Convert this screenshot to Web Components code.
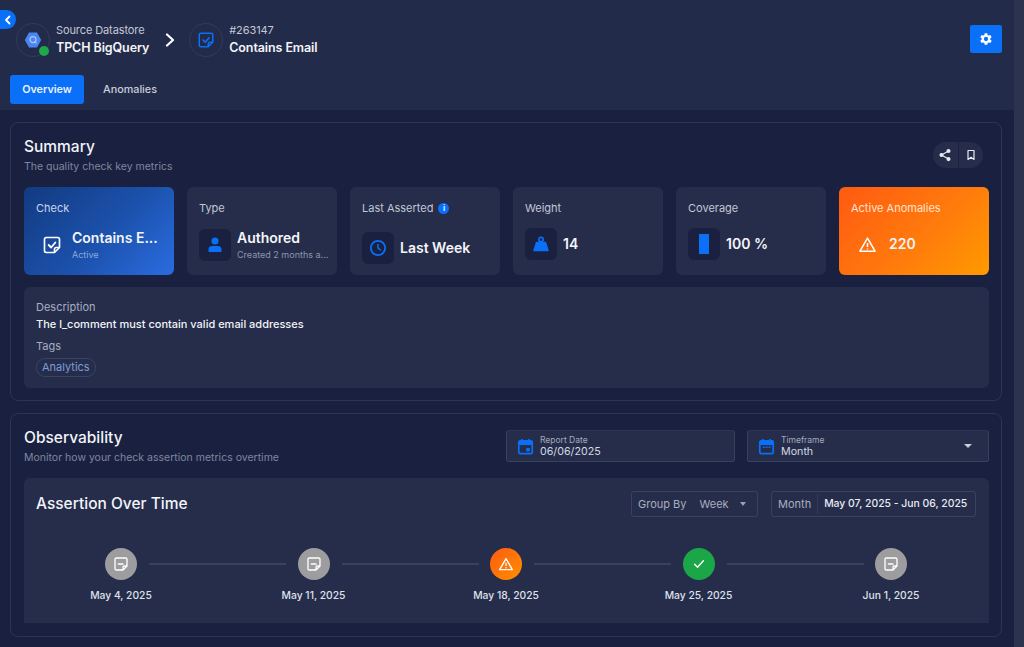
<!DOCTYPE html>
<html>
<head>
<meta charset="utf-8">
<title>Contains Email</title>
<style>
	html,body{ margin:0; height:647px; overflow:hidden; background:#1a2140; }
	body{ font-family:Inter,"Noto Sans",sans-serif; color:#fff; }
</style>
</head>
<body>

<q-app>
	<q-header slot="header"></q-header>
	<q-section heading="Summary" sub="The quality check key metrics" style="height:279px">
		<q-actions slot="tools"></q-actions>
		<q-stats></q-stats>
		<q-description></q-description>
	</q-section>
	<q-section heading="Observability" sub="Monitor how your check assertion metrics overtime" style="height:224px">
		<q-filters slot="tools"></q-filters>
		<q-assertions></q-assertions>
	</q-section>
</q-app>

<script>
	(function(){
		'use strict';

		const BLUE = '#0970f7';
		const ICONS = {
			note:'<path d="M5 3h14a2 2 0 0 1 2 2v10l-6 6H5a2 2 0 0 1-2-2V5a2 2 0 0 1 2-2z" fill="none" stroke="currentColor" stroke-width="2" stroke-linejoin="round"/><path d="M21 15h-4a2 2 0 0 0-2 2v4" fill="none" stroke="currentColor" stroke-width="2"/>',
			check:'<path d="M8 12l3 3 5-6" fill="none" stroke="currentColor" stroke-width="2.2" stroke-linecap="round" stroke-linejoin="round"/>',
			tick:'<path d="M4.500 12.500l5 5L19.500 6.500" fill="none" stroke="currentColor" stroke-width="2.400" stroke-linecap="round" stroke-linejoin="round"/>',
			dash:'<path d="M8 12h7" fill="none" stroke="currentColor" stroke-width="2" stroke-linecap="round"/>',
			warn:'<path d="M12 4L2.5 20.5h19z" fill="none" stroke="currentColor" stroke-width="2" stroke-linejoin="round"/><path d="M12 10v5M12 17v1.4" stroke="currentColor" stroke-width="2"/>'
		};

		function define(tag, css, html, extra){
			class El extends HTMLElement {
				constructor(){
					super();
					this.attachShadow({mode:'open'});
				}
				connectedCallback(){
					const a = n => this.getAttribute(n) || '';
					this.shadowRoot.innerHTML = '<style>'+css+'</style>'+html(a);
					if(extra){ extra(this); }
				}
			}
			customElements.define(tag, El);
		}

		define('q-app', `
			:host{ display:flex; width:1024px; height:647px; overflow:hidden; }
			.main{ width:1014px; flex:none; position:relative; }
			.body{ display:flex; flex-direction:column; gap:12px; padding:12px 12px 0 10px; }
			.bar{ flex:1; background:#2c334f; }
			`, () => `
			<div class="main">
				<slot name="header"></slot>
				<div class="body"><slot></slot></div>
			</div>
			<div class="bar"></div>`);

		define('q-header', `
			:host{ display:block; height:110px; background:#232b4a; position:relative; }
			.back{ position:absolute; left:0; top:10px; width:16px; height:19px; background:${BLUE}; border-radius:0 10px 10px 0; display:flex; align-items:center; justify-content:center; }
			.back svg{ width:10px; height:10px; }
			.crumbs{ display:flex; align-items:center; padding:23px 12px 0 16px; height:33px; }
			.ring{ width:32px; height:32px; border:1px solid #333b5a; border-radius:50%; position:relative; display:flex; align-items:center; justify-content:center; flex:none; }
			.dot{ position:absolute; right:0; bottom:0; width:10px; height:10px; border-radius:50%; background:#1da84a; }
			.txt{ margin-left:6px; }
			.t1{ font-size:11px; line-height:14px; color:#c3c8d6; letter-spacing:-.1px; }
			.t2{ font-size:12.5px; line-height:18px; font-weight:600; color:#f2f4f8; margin-top:2px; letter-spacing:-.1px; }
			.sep{ margin:0 13px 0 15px; width:12px; height:14px; }
			.gear{ margin-left:auto; width:32px; height:28px; border-radius:2px; background:${BLUE}; display:flex; align-items:center; justify-content:center; position:relative; top:-1px; }
			.tabs{ display:flex; align-items:center; margin:19px 0 0 10px; font-size:10.8px; font-weight:600; }
			.tab{ width:74px; height:29px; border-radius:3px; display:flex; align-items:center; justify-content:center; color:#c9cdd9; }
			.on{ background:${BLUE}; color:#e9f1ff; }
			.tab + .tab{ margin-left:0; width:92px; font-weight:500; }
			`, () => `
			<div class="back"><svg viewBox="0 0 10 10"><path d="M6.5 1.5L3 5l3.5 3.5" fill="none" stroke="#fff" stroke-width="1.8" stroke-linecap="round" stroke-linejoin="round"/></svg></div>
			<div class="crumbs">
				<div class="ring">
					<svg width="18" height="18" viewBox="0 0 18 18"><path d="M5 1.5h8L17.2 9 13 16.5H5L.8 9z" fill="#4a85f0"/><circle cx="9" cy="8.6" r="3" fill="none" stroke="#a9c6fa" stroke-width="1.2"/><path d="M10.5 10.4l2 2" stroke="#a9c6fa" stroke-width="1.2"/></svg>
					<div class="dot"></div>
				</div>
				<div class="txt"><div class="t1">Source Datastore</div><div class="t2">TPCH BigQuery</div></div>
				<svg class="sep" viewBox="0 0 12 14"><path d="M3 1.5L9 7l-6 5.5" fill="none" stroke="#fff" stroke-width="2.2" stroke-linecap="round" stroke-linejoin="round"/></svg>
				<div class="ring">
					<svg width="18" height="18" viewBox="0 0 24 24" style="color:${BLUE}">${ICONS.note}${ICONS.check}</svg>
				</div>
				<div class="txt"><div class="t1">#263147</div><div class="t2">Contains Email</div></div>
				<div class="gear"><svg width="16" height="16" viewBox="0 0 24 24"><path fill="#fff" fill-rule="evenodd" d="M19.4 13a7.500 7.500 0 0 0 0-2l2.100-1.600-2-3.500-2.500 1a7.600 7.600 0 0 0-1.700-1L15 3.200h-4L10.600 5.900a7.600 7.600 0 0 0-1.700 1l-2.500-1-2 3.500L6.500 11a7.500 7.500 0 0 0 0 2l-2.100 1.600 2 3.500 2.500-1a7.600 7.600 0 0 0 1.700 1l.4 2.700h4l.4-2.700a7.600 7.600 0 0 0 1.700-1l2.500 1 2-3.500zM13 15.200a3.200 3.200 0 1 1 0-6.400 3.200 3.200 0 0 1 0 6.400z" transform="translate(-1 0)"/></svg></div>
			</div>
			<div class="tabs"><div class="tab on">Overview</div><div class="tab">Anomalies</div></div>`);

		define('q-section', `
			:host{ display:block; box-sizing:border-box; border:1px solid #2d3554; border-radius:8px; background:#1a2140; padding:13px 12px 0 13px; }
			.head{ display:flex; justify-content:space-between; height:51px; }
			h2{ margin:1px 0 0; font-size:15.5px; line-height:20px; font-weight:500; color:#f2f4f8; }
			p{ margin:3px 0 0; font-size:10.5px; line-height:14px; color:#7f869f; }
			`, a => `
			<div class="head">
				<div><h2>${a('heading')}</h2><p>${a('sub')}</p></div>
				<slot name="tools"></slot>
			</div>
			<slot></slot>`);

		define('q-actions', `
			:host{ display:flex; align-items:center; width:50px; height:26px; margin:6px 6px 0 0; background:#252d4a; border-radius:13px; }
			div{ flex:1; height:100%; display:flex; align-items:center; justify-content:center; }
			div + div{ border-left:1px solid #1a2140; }
			`, () => `
			<div><svg width="14" height="14" viewBox="0 0 24 24"><circle cx="18" cy="5" r="3.500" fill="#e8ebf2"/><circle cx="6" cy="12" r="3.500" fill="#e8ebf2"/><circle cx="18" cy="19" r="3.500" fill="#e8ebf2"/><path d="M18 5L6 12l12 7" fill="none" stroke="#e8ebf2" stroke-width="2"/></svg></div>
			<div><svg width="12" height="12" viewBox="0 0 24 24"><path d="M6 3h12v18l-6-4.500L6 21z" fill="none" stroke="#e8ebf2" stroke-width="2.400" stroke-linejoin="round"/></svg></div>`);

		define('q-stats', `
			:host{ display:grid; grid-template-columns:repeat(6,150px); column-gap:13px; height:88px; }
			`, () => `
			<q-stat label="Check" value="Contains E..." sub="Active" tone="blue" style="--row:14px"><svg slot="icon" width="20" height="20" viewBox="0 0 24 24" style="color:#fff">${ICONS.note}${ICONS.check}</svg></q-stat>
			<q-stat label="Type" value="Authored" sub="Created 2 months a..." boxed style="--row:14px"><svg slot="icon" width="18" height="18" viewBox="0 0 18 18"><circle cx="9" cy="5" r="3.500" fill="${BLUE}"/><path d="M2.500 16v-2.500a3.500 3.500 0 0 1 3.500-3.500h6a3.500 3.500 0 0 1 3.500 3.500V16z" fill="${BLUE}"/></svg></q-stat>
			<q-stat label="Last Asserted" value="Last Week" boxed info style="--row:17px"><svg slot="icon" width="18" height="18" viewBox="0 0 24 24"><circle cx="12" cy="12" r="9.500" fill="none" stroke="${BLUE}" stroke-width="2.400"/><path d="M12 6.500V12l4 3" fill="none" stroke="${BLUE}" stroke-width="2"/></svg></q-stat>
			<q-stat label="Weight" value="14" boxed style="--row:13px"><svg slot="icon" width="18" height="18" viewBox="0 0 18 18"><path d="M4.500 7.500h9L16 15.500H2z" fill="${BLUE}" stroke="${BLUE}" stroke-width="1.400" stroke-linejoin="round"/><circle cx="9" cy="4.600" r="2.200" fill="none" stroke="${BLUE}" stroke-width="1.600"/></svg></q-stat>
			<q-stat label="Coverage" value="100 %" boxed style="--row:13px"><svg slot="icon" width="12" height="20" viewBox="0 0 12 20"><rect x="1" width="10" height="20" fill="${BLUE}"/></svg></q-stat>
			<q-stat label="Active Anomalies" value="220" tone="orange" style="--row:13px"><svg slot="icon" width="19" height="19" viewBox="0 0 24 24" style="color:#fff">${ICONS.warn}</svg></q-stat>`);

		define('q-stat', `
			:host{ display:block; box-sizing:border-box; border-radius:6px; background:#252d4b; padding:14px 6px 0 12px; height:88px; min-width:0; }
			:host([tone=blue]){ background:linear-gradient(135deg,#123a80,#1c52ad 55%,#2a6ce0); }
			:host([tone=orange]){ background:linear-gradient(135deg,#ff5a12,#ff7a0c 55%,#ff9a00); }
			.label{ display:flex; align-items:center; gap:5px; font-size:11px; line-height:14px; color:#c2c7d4; }
			:host([tone=orange]) .label{ color:#ffe3cf; }
			:host([tone=blue]) .label{ color:#c9d6ee; }
			.info{ width:11px; height:11px; border-radius:50%; background:${BLUE}; color:#e6efff; font-size:8px; line-height:11px; text-align:center; font-weight:700; }
			.row{ display:flex; align-items:center; margin-top:var(--row,14px); height:32px; }
			.icon{ width:32px; height:32px; flex:none; display:flex; align-items:center; justify-content:center; border-radius:6px; }
			:host([boxed]) .icon{ background:#1a2140; }
			.text{ margin-left:6px; min-width:0; }
			.value{ font-size:14px; line-height:18px; font-weight:600; color:#f4f5f9; white-space:nowrap; }
			.sub{ font-size:9px; line-height:14px; margin-top:1px; color:#8d94ab; white-space:nowrap; }
			:host([tone=blue]) .sub{ color:#8ea8d8; }
			:host([tone=blue]) .text{ margin-left:4px; }
			:host([tone=orange]) .text{ margin-left:6px; }
			`, a => `
			<div class="label">${a('label')}</div>
			<div class="row">
				<div class="icon"><slot name="icon"></slot></div>
				<div class="text"><div class="value">${a('value')}</div>${a('sub') ? '<div class="sub">'+a('sub')+'</div>' : ''}</div>
			</div>`, el => {
				if(el.hasAttribute('info')){
					const i = document.createElement('span');
					i.className = 'info';
					i.textContent = 'i';
					el.shadowRoot.querySelector('.label').appendChild(i);
				}
			});

		define('q-description', `
			:host{ display:block; box-sizing:border-box; height:101px; margin-top:12px; padding:13px 12px; border-radius:6px; background:#252d4b; }
			.l{ font-size:11px; line-height:14px; color:#a8aec0; }
			.v{ font-size:11px; line-height:18px; font-weight:500; color:#f2f4f8; margin:1px 0 6px; }
			.tag{ display:inline-block; margin-top:5px; padding:0 5px; height:17px; line-height:17px; border:1px solid #38426a; border-radius:9px; font-size:11px; color:#7e9bd6; }
			`, () => `
			<div class="l">Description</div>
			<div class="v">The l_comment must contain valid email addresses</div>
			<div class="l">Tags</div>
			<div class="tag">Analytics</div>`);

		define('q-filters', `
			:host{ display:flex; gap:12px; height:32px; margin-top:3px; }
			`, () => `
			<q-field label="Report Date" value="06/06/2025" style="width:229px"><svg slot="icon" width="17" height="17" viewBox="0 0 24 24"><path d="M7 1.500v4M17 1.500v4" stroke="${BLUE}" stroke-width="2.400"/><rect x="2.500" y="4" width="19" height="18" rx="2" fill="none" stroke="${BLUE}" stroke-width="2.400"/><rect x="2.500" y="4" width="19" height="6" fill="${BLUE}"/><rect x="13" y="14" width="5" height="5" fill="${BLUE}"/></svg></q-field>
			<q-field label="Timeframe" value="Month" caret style="width:242px"><svg slot="icon" width="17" height="17" viewBox="0 0 24 24"><path d="M7 1.500v4M17 1.500v4" stroke="${BLUE}" stroke-width="2.400"/><rect x="2.500" y="4" width="19" height="18" rx="2" fill="none" stroke="${BLUE}" stroke-width="2.400"/><rect x="2.500" y="4" width="19" height="6" fill="${BLUE}"/><path d="M7 13h2.500M11 13h2.500M15 13h2.500" stroke="${BLUE}" stroke-width="2"/></svg></q-field>`);

		define('q-field', `
			:host{ display:flex; box-sizing:border-box; align-items:center; height:32px; padding:0 12px 0 10px; background:#252d4b; border:1px solid #39415f; border-top-color:#2d3554; border-radius:3px; }
			.t{ margin-left:6px; flex:1; }
			.l{ font-size:8.500px; line-height:10px; color:#a3a9bb; margin-top:1px; }
			.v{ font-size:10.7px; line-height:13px; color:#d5d8e2; }
			.c{ width:0; height:0; border-left:4px solid transparent; border-right:4px solid transparent; border-top:4px solid #c9cdd9; margin-right:4px; }
			`, a => `
			<slot name="icon"></slot>
			<div class="t"><div class="l">${a('label')}</div><div class="v">${a('value')}</div></div>`, el => {
				if(el.hasAttribute('caret')){
					const c = document.createElement('div');
					c.className = 'c';
					el.shadowRoot.appendChild(c);
				}
			});

		define('q-assertions', `
			:host{ display:block; box-sizing:border-box; height:145px; padding:13px 13px 0 12px; background:#252d4b; border-radius:6px 6px 0 0; }
			.top{ display:flex; align-items:center; height:26px; }
			h3{ margin:0 0 2px; flex:1; font-size:15.5px; font-weight:500; color:#f2f4f8; }
			.box{ display:flex; align-items:center; box-sizing:border-box; height:26px; border:1px solid #3a4261; border-radius:3px; font-size:11px; color:#a9aec0; }
			.group{ width:127px; padding:0 6px; }
			.group .w{ margin-left:13px; }
			.group .c{ margin-left:11px; width:0; height:0; border-left:3.500px solid transparent; border-right:3.500px solid transparent; border-top:4px solid #9aa0b4; }
			.range{ width:205px; margin-left:13px; padding-left:6px; }
			.range b{ font-size:10.4px; font-weight:500; color:#e9ebf1; margin-left:6px; padding-left:6px; border-left:1px solid #323a58; line-height:20px; white-space:nowrap; }
			.line{ display:flex; align-items:flex-start; margin-top:31px; padding-left:69px; }
			.rule{ width:137px; height:2px; margin-top:15px; background:#39415f; margin-left:12px; margin-right:11.500px; flex:none; }
			`, () => `
			<div class="top">
				<h3>Assertion Over Time</h3>
				<div class="box group">Group By<span class="w">Week</span><span class="c"></span></div>
				<div class="box range">Month<b>May 07, 2025 - Jun 06, 2025</b></div>
			</div>
			<div class="line">
				<q-node tone="grey" date="May 4, 2025"></q-node><div class="rule"></div>
				<q-node tone="grey" date="May 11, 2025"></q-node><div class="rule"></div>
				<q-node tone="orange" date="May 18, 2025"></q-node><div class="rule"></div>
				<q-node tone="green" date="May 25, 2025"></q-node><div class="rule"></div>
				<q-node tone="grey" date="Jun 1, 2025"></q-node>
			</div>`);

		define('q-node', `
			:host{ display:block; position:relative; width:32px; height:32px; flex:none; }
			.c{ width:32px; height:32px; border-radius:50%; display:flex; align-items:center; justify-content:center; color:#fff; }
			.grey{ background:#9d9d9f; }
			.orange{ background:linear-gradient(135deg,#ff5a12,#ff9000); }
			.green{ background:#1ba648; }
			.d{ position:absolute; top:39.500px; left:50%; transform:translateX(-50%); font-size:10.3px; line-height:14px; font-weight:500; white-space:nowrap; color:#dfe2ea; }
			`, a => {
				const t = a('tone');
				const inner = t === 'grey' ? ICONS.note + ICONS.dash : t === 'orange' ? ICONS.warn : ICONS.tick;
				const size = t === 'green' ? 14 : 16;
				return `<div class="c ${t}"><svg width="${size}" height="${size}" viewBox="0 0 24 24">${inner}</svg></div><div class="d">${a('date')}</div>`;
			});
	})();
</script>
</body>
</html>
